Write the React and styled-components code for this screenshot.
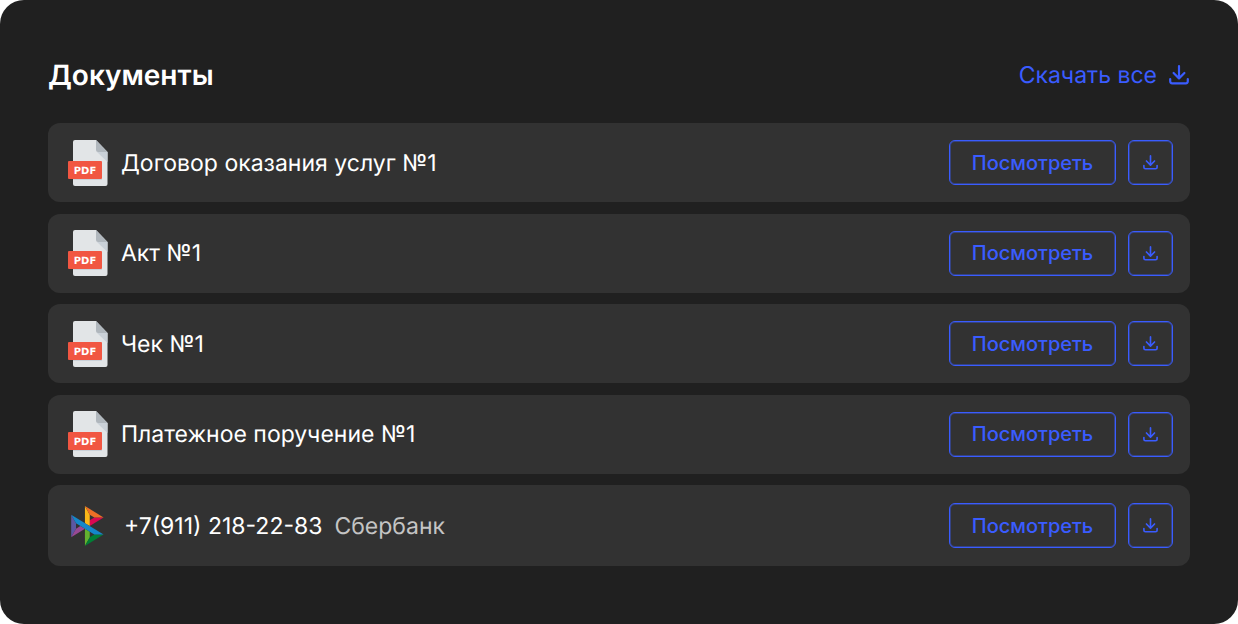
import React from "react";
import styled, { createGlobalStyle } from "styled-components";

const GlobalStyle = createGlobalStyle`
  * {
    box-sizing: border-box;
  }
  body {
    margin: 0;
    background-color: #ffffff;
    font-family: Inter, "Noto Sans", sans-serif;
    text-rendering: geometricPrecision;
  }
`;

const Panel = styled.main`
  display: flex;
  flex-direction: column;
  min-height: 100vh;
  padding: 55px 48px 58px;
  background-color: #202020;
  border-radius: 24px;
`;

const Header = styled.header`
  display: flex;
  align-items: center;
  justify-content: space-between;
  height: 40px;
  margin-bottom: 28px;
  padding-right: 1px;
`;

const Title = styled.h1`
  margin: 0;
  color: #ffffff;
  font-size: 28px;
  font-weight: 600;
  line-height: 40px;
`;

const DownloadAll = styled.a`
  display: flex;
  align-items: center;
  gap: 12px;
  color: #3a5cff;
  font-size: 23px;
  line-height: 40px;
  text-decoration: none;
`;

const List = styled.ul`
  display: flex;
  flex: 1;
  flex-direction: column;
  justify-content: space-between;
  margin: 0;
  padding: 0;
  list-style: none;
`;

const Row = styled.li`
  display: flex;
  align-items: center;
  gap: 12px;
  height: ${(props) => (props.$tall ? "81px" : "79px")};
  padding: 0 17px 0 19px;
  background-color: #323232;
  border-radius: 12px;
`;

const IconBox = styled.div`
  width: ${(props) => (props.$bank ? "45px" : "42px")};
  padding-left: ${(props) => (props.$bank ? "4px" : "0")};
  svg {
    display: block;
  }
`;

const Name = styled.div`
  display: flex;
  flex: 1;
  gap: 12px;
  color: #ffffff;
  font-size: 23px;
  line-height: 32px;
`;

const Bank = styled.span`
  color: #c4c4c4;
`;

const Button = styled.button`
  display: flex;
  align-items: center;
  justify-content: center;
  width: ${(props) => (props.$square ? "45px" : "167px")};
  height: 45px;
  padding: 0;
  background-color: transparent;
  border: 1px solid #3a5cff;
  border-radius: 6px;
  box-shadow: inset 0 0 0 1px rgba(58, 92, 255, 0.4);
  color: #3a5cff;
  font-family: inherit;
  font-size: 20px;
  font-weight: 500;
  cursor: pointer;
`;

const DownloadIcon = ({ size }) => (
  <svg
    width={size}
    height={size}
    viewBox="0 0 20 20"
    fill="none"
    stroke="currentColor"
    strokeWidth="2.2"
    strokeLinecap="round"
    strokeLinejoin="round"
    aria-hidden="true"
  >
    <path d="M10 1.2v12M4.600 8l5.400 5.400L15.400 8" />
    <path d="M1.200 14v2.300a2 2 0 0 0 2 2h13.600a2 2 0 0 0 2-2V14" />
  </svg>
);

const PdfIcon = () => (
  <svg width="42" height="46" viewBox="0 0 42 46" aria-hidden="true">
    <path d="M8 0h21l11.500 12v32a2 2 0 0 1-2 2H8a2 2 0 0 1-2-2V2a2 2 0 0 1 2-2z" fill="#e2e5e7" />
    <path d="M30 12h10.500v10z" fill="#cad1d8" />
    <path d="M29 0l11.500 12H31a2 2 0 0 1-2-2z" fill="#b0b7bd" />
    <path d="M6 39h29v1H6z" fill="#cad1d8" />
    <rect x="1" y="21" width="34" height="18" rx="1" fill="#f15642" />
    <text
      x="18"
      y="34"
      fill="#ffffff"
      fontFamily="DejaVu Sans, sans-serif"
      fontSize="10"
      fontWeight="700"
      textAnchor="middle"
    >
      PDF
    </text>
  </svg>
);

const SbpIcon = () => (
  <svg width="33" height="40" viewBox="0 0 98 120" aria-hidden="true">
    <path d="M0 26.12l14.532 25.975v15.844L.017 93.863z" fill="#5b57a2" />
    <path d="M55.797 42.643l13.617-8.346 27.868-.026-41.485 25.414z" fill="#d90751" />
    <path d="M55.72 25.967l.077 34.39-14.566-8.95V0z" fill="#fab718" />
    <path d="M97.282 34.271l-27.869.026-13.693-8.33L41.231 0z" fill="#ed6f26" />
    <path d="M55.797 94.007V77.322l-14.566-8.78.008 51.458z" fill="#63b22f" />
    <path d="M41.24 120l14.556-25.993 13.583-8.27 27.843-.034z" fill="#017f36" />
    <path d="M.017 93.863l41.333-25.320-13.896-8.526-12.922 7.922z" fill="#984995" />
    <path d="M69.380 85.737L14.531 52.095 0 26.120l97.223 59.583z" fill="#1487c9" />
  </svg>
);

const documents = [
  { name: "Договор оказания услуг №1" },
  { name: "Акт №1" },
  { name: "Чек №1" },
  { name: "Платежное поручение №1" },
  { name: "+7(911) 218-22-83", bank: "Сбербанк" },
];

const App = () => {
  return (
    <>
      <GlobalStyle />
      <Panel>
        <Header>
          <Title>Документы</Title>
          <DownloadAll href="#">
            Скачать все
            <DownloadIcon size={20} />
          </DownloadAll>
        </Header>
        <List>
          {documents.map((item) => (
            <Row key={item.name} $tall={Boolean(item.bank)}>
              <IconBox $bank={Boolean(item.bank)}>
                {item.bank ? <SbpIcon /> : <PdfIcon />}
              </IconBox>
              <Name>
                <span>{item.name}</span>
                {item.bank && <Bank>{item.bank}</Bank>}
              </Name>
              <Button type="button">Посмотреть</Button>
              <Button type="button" $square aria-label="Скачать">
                <DownloadIcon size={15} />
              </Button>
            </Row>
          ))}
        </List>
      </Panel>
    </>
  );
};

export default App;
